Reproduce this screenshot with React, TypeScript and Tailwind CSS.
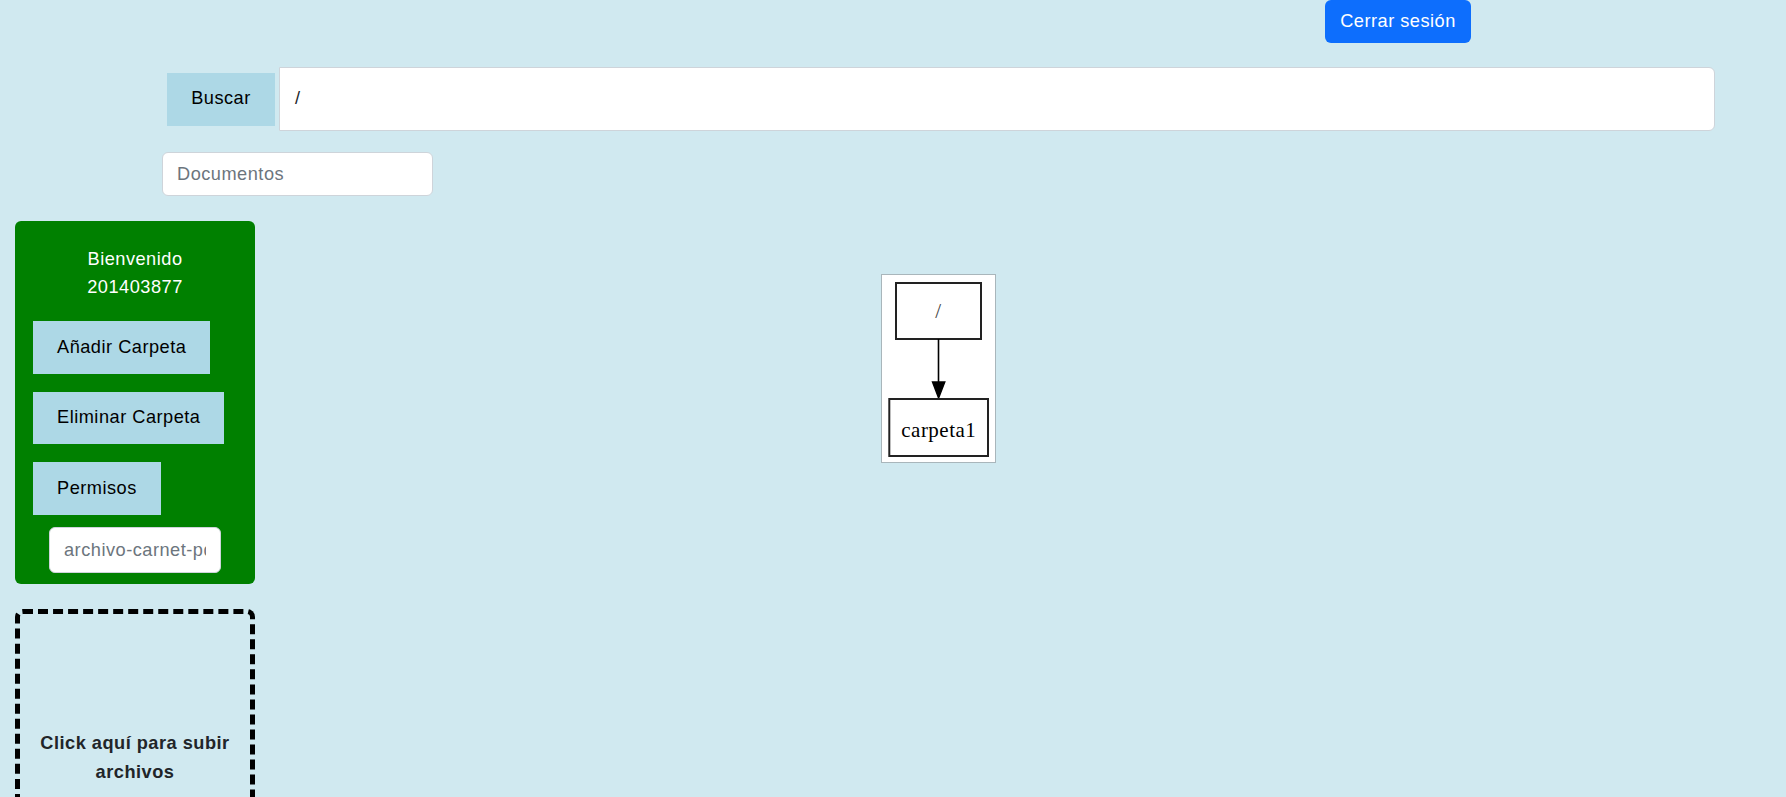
import React from "react";

function Graph() {
  return (
    <div className="w-[115px] h-[189px] bg-white border border-[#a9b6bb]">
      <svg width="113" height="187" viewBox="0 0 113 187" xmlns="http://www.w3.org/2000/svg">
        <rect x="14" y="8" width="85" height="56" fill="white" stroke="#222" strokeWidth="2" />
        <text x="56.5" y="43" textAnchor="middle" fontFamily="'Liberation Serif', 'Times New Roman', serif" fontSize="21" fill="#444">/</text>
        <line x1="56.5" y1="64" x2="56.5" y2="108" stroke="#000" strokeWidth="1.6" />
        <polygon points="50.5,107 62.8,107 56.6,123" fill="#000" stroke="#000" strokeWidth="1.4" />
        <rect x="7.3" y="124" width="98.7" height="57" fill="white" stroke="#222" strokeWidth="2" />
        <text x="56.8" y="162" textAnchor="middle" fontFamily="'Liberation Serif', 'Times New Roman', serif" fontSize="21" fill="#000">carpeta1</text>
      </svg>
    </div>
  );
}

export default function App() {
  return (
    <div className="w-[1786px] h-[797px] overflow-hidden bg-[#d0e9f0] font-['Liberation_Sans',Arial,sans-serif] text-[18.2px] leading-[27.3px] tracking-[0.5px] text-[#212529]">
      <div className="flex justify-end pr-[315px]">
        <button className="w-[146px] h-[43px] rounded-[6px] bg-[#0d6efd] text-white flex items-center justify-center">
          Cerrar sesión
        </button>
      </div>

      <div className="mt-[24px] flex items-center h-[64px] pl-[167px] pr-[71px] gap-[4px]">
        <div className="w-[108px] h-[53px] bg-[#add8e6] text-black flex items-center justify-center shrink-0">
          Buscar
        </div>
        <div className="flex-1 h-[64px] bg-white border border-[#ced4da] rounded-r-[6px] flex items-center pl-[15px] text-[#212529]">
          /
        </div>
      </div>

      <input
        className="block mt-[21px] ml-[162px] w-[271px] h-[44px] bg-white border border-[#ced4da] rounded-[6px] px-[14px] outline-none tracking-[0.5px] placeholder:text-[#6c757d]"
        placeholder="Documentos"
      />

      <div className="mt-[25px] flex">
        <div className="ml-[15px] w-[240px] flex flex-col shrink-0">
          <div className="h-[363px] rounded-[6px] bg-[#008000] pt-[24px] flex flex-col">
            <div className="text-white text-center leading-[28px]">
              Bienvenido
              <br />
              201403877
            </div>
            <div className="pl-[18px] flex flex-col">
              <button className="mt-[20px] w-[177px] h-[52.5px] bg-[#add8e6] text-black text-left pl-[24px]">
                Añadir Carpeta
              </button>
              <button className="mt-[18px] w-[191px] h-[52.5px] bg-[#add8e6] text-black text-left pl-[24px]">
                Eliminar Carpeta
              </button>
              <button className="mt-[18px] w-[128px] h-[52.5px] bg-[#add8e6] text-black text-left pl-[24px]">
                Permisos
              </button>
            </div>
            <input
              className="block mt-[12.5px] mx-auto w-[172px] h-[46px] bg-white border border-[#ced4da] rounded-[6px] px-[14px] outline-none tracking-[0.5px] placeholder:text-[#6c757d]"
              placeholder="archivo-carnet-pdf"
            />
          </div>
          <div className="mt-[25px] h-[300px] border-[5px] border-dashed border-black rounded-[8px] pt-[115px] text-center font-bold leading-[29px] text-[#212529]">
            Click aquí para subir
            <br />
            archivos
          </div>
        </div>
        <div className="pl-[626px] pt-[53px]">
          <Graph />
        </div>
      </div>
    </div>
  );
}
